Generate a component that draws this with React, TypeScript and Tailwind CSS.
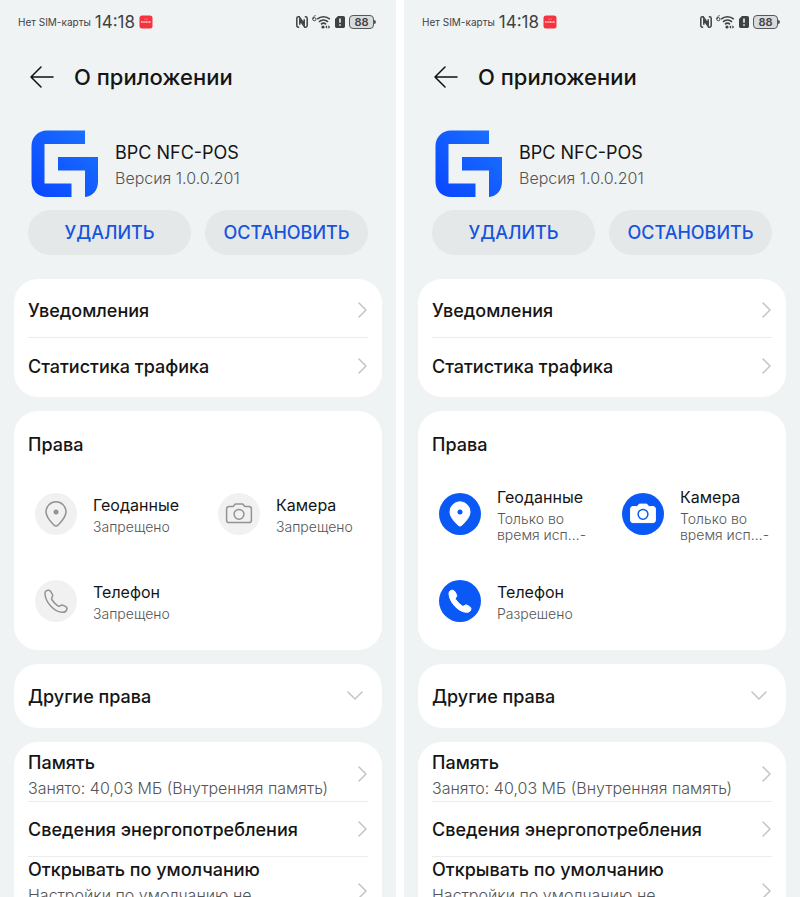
import { ReactNode } from "react";

type PermissionKind = "location" | "camera" | "phone";

interface Permission {
  kind: PermissionKind;
  title: string;
  status: string[];
  granted: boolean;
}

const deniedPermissions: Permission[] = [
  { kind: "location", title: "Геоданные", status: ["Запрещено"], granted: false },
  { kind: "camera", title: "Камера", status: ["Запрещено"], granted: false },
  { kind: "phone", title: "Телефон", status: ["Запрещено"], granted: false },
];

const grantedPermissions: Permission[] = [
  { kind: "location", title: "Геоданные", status: ["Только во", "время исп…-"], granted: true },
  { kind: "camera", title: "Камера", status: ["Только во", "время исп…-"], granted: true },
  { kind: "phone", title: "Телефон", status: ["Разрешено"], granted: true },
];

function StatusBar() {
  return (
    <div className="flex h-11 items-center justify-between pl-[18px] pr-5 text-[#3f4243]">
      <div className="flex items-center gap-1">
        <span className="text-[10px] leading-4">Нет SIM-карты</span>
        <span className="text-[17px] leading-5">14:18</span>
        <svg width="14" height="14" viewBox="0 0 14 14" aria-hidden="true">
          <rect x="0.5" y="0.5" width="13" height="13" rx="2.5" fill="#f5333f" />
          <path d="M2 7h10" stroke="#fff" strokeWidth="1.4" strokeDasharray="1.2 0.4" opacity="0.8" />
          <path d="M5 3.6c1 1 3 1 4 0" stroke="#fff" strokeWidth="0.6" fill="none" opacity="0.5" />
        </svg>
      </div>
      <div className="flex items-center gap-1">
        {/* NFC */}
        <svg width="12" height="12" viewBox="0 0 12 12" fill="none" stroke="currentColor" strokeWidth="1.5" aria-hidden="true">
          <path d="M3.2 11.2H2.5c-1 0-1.7-.7-1.7-1.7V2.5C.8 1.5 1.5.8 2.5.8h.7L8.2 8V3.2" />
          <path d="M8.8.8h.7c1 0 1.7.7 1.7 1.7v7c0 1-.7 1.7-1.7 1.7h-.7L3.8 4v4.8" />
        </svg>
        {/* Wi-Fi 6 */}
        <svg width="19" height="14" viewBox="0 0 19 14" fill="none" stroke="currentColor" aria-hidden="true">
          <path d="M3.6.6C1.8 1 .8 2.4.8 4" strokeWidth="1" />
          <circle cx="2.4" cy="4.2" r="1.6" strokeWidth="1" />
          <path d="M5.2 4.2a9.5 9.5 0 0 1 12.6 0M7 6.8a6.5 6.5 0 0 1 9 0M9 9.3a3.6 3.6 0 0 1 5 0" strokeWidth="1.6" />
          <circle cx="11" cy="12" r="1.6" fill="currentColor" stroke="none" />
          <path d="M13.2 12l1.9-1.7v3.4zM18.2 12l-1.9-1.7v3.4z" fill="currentColor" stroke="none" />
        </svg>
        {/* SIM */}
        <svg width="10" height="12" viewBox="0 0 10 12" aria-hidden="true">
          <path d="M3 0h5.2C9.2 0 10 .8 10 1.8v8.4c0 1-.8 1.8-1.8 1.8H1.8C.8 12 0 11.2 0 10.2V3z" fill="currentColor" />
          <path d="M5 2.6v4.2M5 8.2v1.6" stroke="#f0f3f4" strokeWidth="1.6" />
        </svg>
        <div className="flex items-center">
          <span className="flex h-[14px] w-[25px] items-center justify-center rounded border border-[#55585a] bg-[#d9dcdd] text-[11px] font-semibold leading-3">
            88
          </span>
          <span className="h-1 w-[2px] rounded-r bg-[#55585a]" />
        </div>
      </div>
    </div>
  );
}

function Logo() {
  return (
    <svg width="68" height="68" viewBox="0 0 68 68" aria-hidden="true">
      <defs>
        <linearGradient id="logo-fill" x1="0" y1="1" x2="1" y2="0">
          <stop offset="0" stopColor="#0846ff" />
          <stop offset="1" stopColor="#1d73ff" />
        </linearGradient>
      </defs>
      <path
        d="M54 .5V14H13.5V53.5H40.5V67H16C7 67 .5 60.5.5 51.5V16C.5 7 7 .5 16 .5ZM27 27H67V51.5C67 60 62 66.500 54 67V40.5H27Z"
        fill="url(#logo-fill)"
      />
    </svg>
  );
}

function PermissionIcon({ kind, granted }: { kind: PermissionKind; granted: boolean }) {
  const fill = granted ? "#fff" : "none";
  const line = granted ? "#fff" : "#939393";
  const hole = granted ? "#0a59f7" : "#939393";

  return (
    <span
      className={`flex size-[42px] shrink-0 items-center justify-center rounded-full ${
        granted ? "bg-[#0a59f7]" : "bg-[#f1f1f1]"
      }`}
    >
      <svg width="28" height="28" viewBox="0 0 28 28" fill={fill} stroke={line} strokeWidth={granted ? 1 : 1.5} strokeLinejoin="round" aria-hidden="true">
        {kind === "location" && (
          <>
            <path d="M14 26c-.8 0-1.5-.4-2.1-1C7.5 20.7 4 16.4 4 11.8a10 10 0 0 1 20 0c0 4.6-3.5 8.9-7.9 13.2-.6.6-1.3 1-2.1 1Z" />
            <circle cx="14" cy="12" r="2.5" fill={hole} stroke="none" />
          </>
        )}
        {kind === "camera" && (
          <>
            <path d="M4 6.5H7.5c.7 0 1.2-.3 1.5-.9l.4-.6c.3-.6.8-.9 1.5-.9h6.2c.7 0 1.2.3 1.5.9l.4.6c.3.6.8.9 1.5.9H24c1.5 0 2.400.9 2.400 2.400v11.300c0 1.500-.9 2.400-2.400 2.400H4c-1.5 0-2.400-.9-2.400-2.400V8.900c0-1.500.9-2.400 2.400-2.400Z" />
            <circle cx="14" cy="14.3" r="4.9" fill="none" stroke={hole} strokeWidth="1.5" />
          </>
        )}
        {kind === "phone" && (
          <path d="M3 6.5C3 4.5 4.6 3 6.6 3.2c1 .1 1.7.6 2.200 1.400l1.600 2.800c.6 1.100.4 2-.3 2.800-.8.9-.8 1.600-.2 2.600 1.600 2.300 3.600 4.400 6 6 .9.6 1.700.5 2.500-.2.9-.8 1.900-.9 2.900-.3l2.400 1.400c1.200.7 1.500 1.900 1 3.200-.7 1.700-2.300 2.600-4.400 2.400C12.200 24.900 3.200 15 3 6.500Z" />
        )}
      </svg>
    </span>
  );
}

function Chevron({ down = false }: { down?: boolean }) {
  return (
    <svg
      className="shrink-0"
      width="16"
      height="16"
      viewBox="0 0 16 16"
      fill="none"
      stroke="#c4c4c4"
      strokeWidth="1.5"
      strokeLinecap="round"
      strokeLinejoin="round"
      aria-hidden="true"
    >
      <path d={down ? "M1 4l7 7 7-7" : "M7 1l7 7-7 7"} />
    </svg>
  );
}

function Card({ children }: { children: ReactNode }) {
  return <section className="rounded-3xl bg-white">{children}</section>;
}

function Row({ title, note, tall = false }: { title: string; note?: string; tall?: boolean }) {
  return (
    <button
      type="button"
      className={`flex w-full items-center justify-between text-left ${tall ? "h-[68px]" : "h-[55px]"}`}
    >
      <span className={`min-w-0 flex-1 ${tall ? "self-start pt-px" : note ? "pt-1" : "pt-0.5"}`}>
        <span className="block text-[18px] font-medium leading-6">{title}</span>
        {note && <span className="block text-[16px] font-light leading-[26px] text-[#555]">{note}</span>}
      </span>
      <Chevron />
    </button>
  );
}

function AppInfoScreen({ permissions }: { permissions: Permission[] }) {
  return (
    <main className="min-w-0 bg-[#f0f3f4]">
      <StatusBar />

      <header className="flex h-[66px] items-center gap-5 pl-[30px]">
        <button type="button" aria-label="Назад">
          <svg width="24" height="22" viewBox="0 0 24 22" fill="none" stroke="#111" strokeWidth="1.5" strokeLinecap="round" strokeLinejoin="round">
            <path d="M11 1L1 11l10 10M1 11h22" />
          </svg>
        </button>
        <h1 className="text-[22px] font-medium leading-8">О приложении</h1>
      </header>

      <div className="flex items-center gap-4 px-[31px] pt-5">
        <Logo />
        <div className="pt-1">
          <p className="text-[18px] leading-6">BPC NFC-POS</p>
          <p className="text-[16px] font-light leading-[26px] text-[#555]">Версия 1.0.0.201</p>
        </div>
      </div>

      <div className="grid grid-cols-2 gap-[14px] px-7 pt-3">
        <button type="button" className="h-[45px] rounded-full bg-[#e5e8e9] text-[18px] font-medium text-[#1754de]">
          УДАЛИТЬ
        </button>
        <button type="button" className="h-[45px] rounded-full bg-[#e5e8e9] text-[18px] font-medium text-[#1754de]">
          ОСТАНОВИТЬ
        </button>
      </div>

      <div className="flex flex-col gap-[14px] px-[14px] pt-6">
        <Card>
          <div className="divide-y divide-[#ececec] px-[14px] py-1">
            <Row title="Уведомления" />
            <Row title="Статистика трафика" />
          </div>
        </Card>

        <Card>
          <h2 className="px-[14px] pt-[22px] text-[18px] font-medium leading-6">Права</h2>
          <div className="grid grid-cols-2 pb-1.5 pr-0.5 pt-[13px]">
            {permissions.map((item) => (
              <div key={item.kind} className="flex h-[87px] items-center gap-4 pl-[21px]">
                <PermissionIcon kind={item.kind} granted={item.granted} />
                <div className="whitespace-nowrap">
                  <p className="pb-0.5 text-[16px] leading-6">{item.title}</p>
                  {item.status.map((line) => (
                    <p key={line} className="text-[14px] font-light leading-4 text-[#555]">
                      {line}
                    </p>
                  ))}
                </div>
              </div>
            ))}
          </div>
        </Card>

        <Card>
          <button type="button" className="flex h-16 w-full items-center justify-between pl-[14px] pr-[19px] text-left">
            <span className="pt-0.5 text-[18px] font-medium leading-6">Другие права</span>
            <Chevron down />
          </button>
        </Card>

        <Card>
          <div className="divide-y divide-[#ececec] px-[14px] pb-1 pt-[5px]">
            <Row title="Память" note="Занято: 40,03 МБ (Внутренняя память)" />
            <Row title="Сведения энергопотребления" />
            <Row title="Открывать по умолчанию" note="Настройки по умолчанию не" tall />
          </div>
        </Card>
      </div>
    </main>
  );
}

export default function App() {
  return (
    <div className="grid h-screen grid-cols-2 gap-2 overflow-hidden bg-white font-['Inter','Liberation_Sans',sans-serif] text-[#151515]">
      <AppInfoScreen permissions={deniedPermissions} />
      <AppInfoScreen permissions={grantedPermissions} />
    </div>
  );
}
